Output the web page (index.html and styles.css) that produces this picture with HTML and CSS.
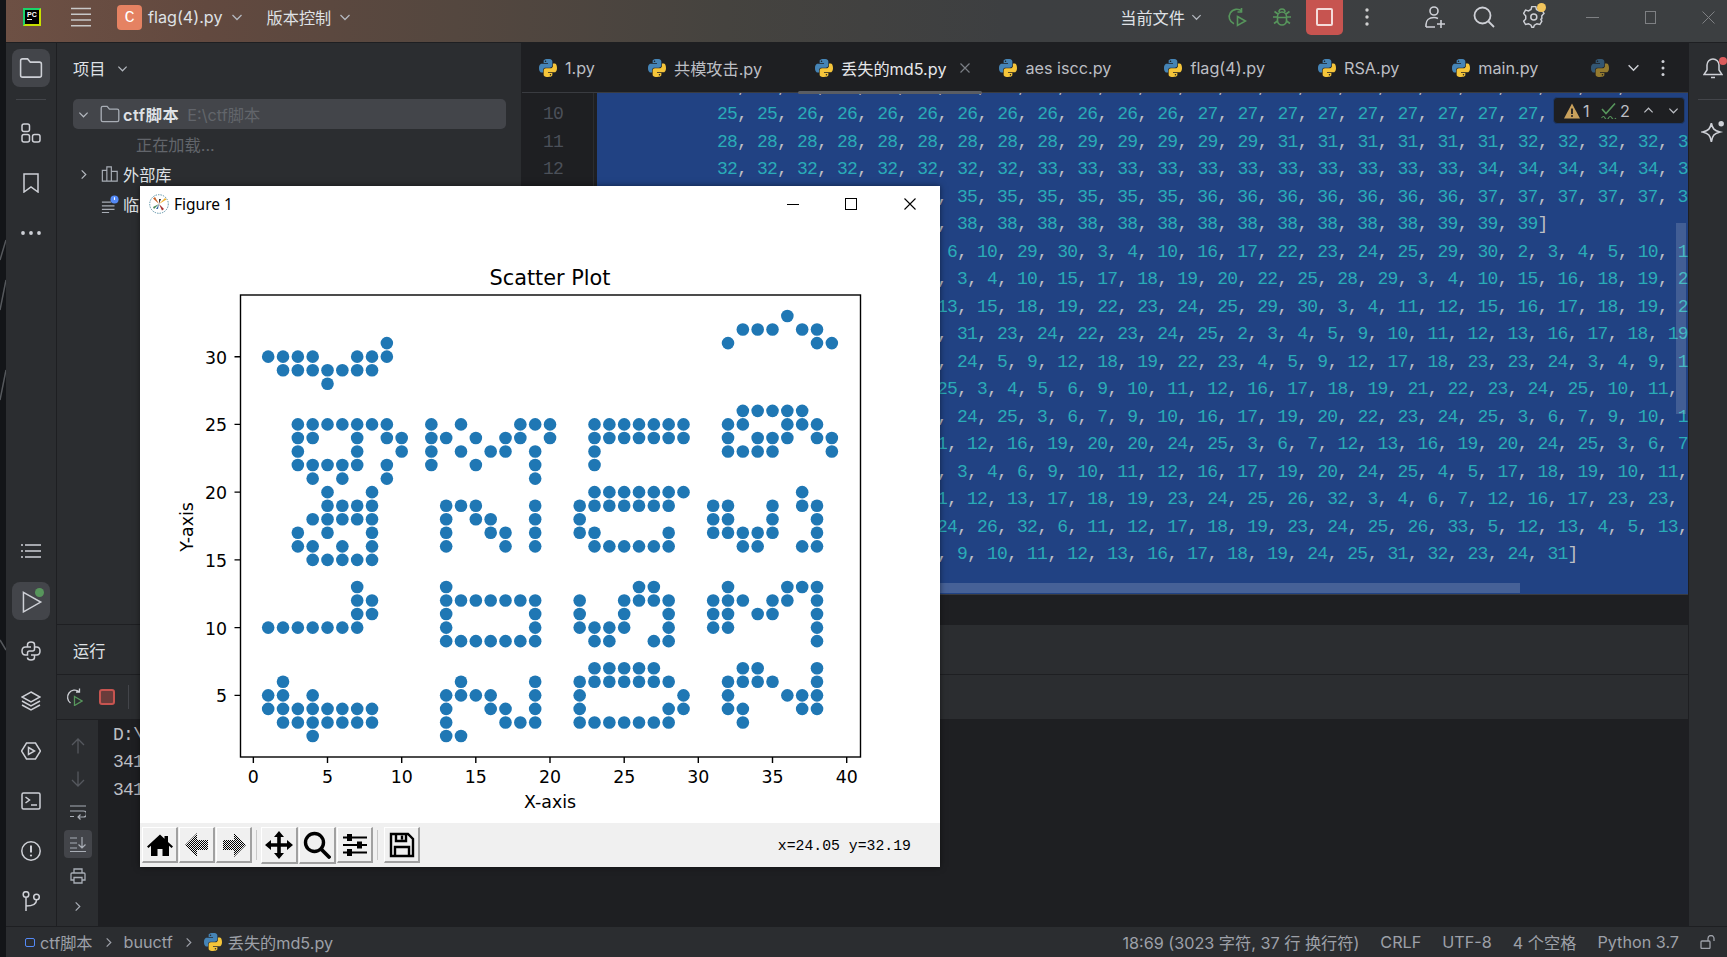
FILE: index.html
```html
<!DOCTYPE html>
<html lang="zh">
<head>
<meta charset="utf-8">
<title>PyCharm</title>
<link rel="stylesheet" href="styles.css">
</head>
<body>
<svg class="defs" width="0" height="0" aria-hidden="true">
  <defs>
    <symbol id="py" viewBox="0 0 24 24">
      <path fill="#4584b6" d="M11.914 0C5.82 0 6.2 2.656 6.2 2.656l.007 2.752h5.814v.826H3.9S0 5.789 0 11.969c0 6.18 3.403 5.96 3.403 5.96h2.03v-2.867s-.109-3.42 3.35-3.42h5.766s3.24.052 3.24-3.148V3.202S18.28 0 11.913 0zM8.708 1.85c.578 0 1.046.47 1.046 1.052 0 .581-.468 1.051-1.046 1.051-.579 0-1.046-.47-1.046-1.051 0-.582.467-1.052 1.046-1.052z"/>
      <path fill="#f5c53a" d="M12.087 24c6.092 0 5.712-2.656 5.712-2.656l-.007-2.752h-5.814v-.826h8.123s3.9.445 3.9-5.735c0-6.18-3.404-5.96-3.404-5.96h-2.03v2.867s.109 3.42-3.35 3.42H9.45s-3.24-.052-3.24 3.148v5.292S5.72 24 12.087 24zm3.206-1.85c-.579 0-1.046-.47-1.046-1.052 0-.581.467-1.051 1.046-1.051.578 0 1.046.47 1.046 1.051 0 .582-.468 1.052-1.046 1.052z"/>
    </symbol>
    <symbol id="chev" viewBox="0 0 12 12"><path d="M1.5 4l4.5 4.5L10.5 4" fill="none" stroke="currentColor" stroke-width="1.3"/></symbol>
    <symbol id="chev-r" viewBox="0 0 12 12"><path d="M4 1.5L8.5 6 4 10.5" fill="none" stroke="currentColor" stroke-width="1.3"/></symbol>
    <symbol id="folder" viewBox="0 0 20 20"><path d="M2 4.5A1.5 1.5 0 0 1 3.500 3h3.900l2.100 2.500h7A1.500 1.500 0 0 1 18 7v8.500a1.500 1.500 0 0 1-1.500 1.500h-13A1.500 1.500 0 0 1 2 15.500z" fill="none" stroke="currentColor" stroke-width="1.2"/></symbol>
    <pattern id="dither" width="2" height="2" patternUnits="userSpaceOnUse"><rect width="1" height="1" fill="#000"/><rect x="1" y="1" width="1" height="1" fill="#000"/></pattern>
  </defs>
</svg>

<div class="shell">
  <div class="wallpaper">
    <svg class="wall-art" viewBox="0 0 6 957" preserveAspectRatio="none"><path d="M0 260L6 240M0 310L6 280M0 400L6 370M0 640L6 650" stroke="#55585c" stroke-width="1.500"/></svg>
  </div>
  <div class="ide">
    <header class="titlebar">
      <div class="pc-logo"><span class="pc-text">PC</span><span class="pc-bar"></span></div>
      <svg class="burger" viewBox="0 0 20 20"><path d="M0 1.500h20M0 7.300h20M0 13h20M0 18.700h20" stroke="#c8c8c8" stroke-width="1.600"/></svg>
      <div class="project-badge">C</div>
      <span class="t-label t-file">flag(4).py</span>
      <svg class="t-chev"><use href="#chev"/></svg>
      <span class="t-label t-vcs">版本控制</span>
      <svg class="t-chev"><use href="#chev"/></svg>
      <div class="t-right">
        <span class="t-label">当前文件</span>
        <svg class="t-chev t-chev-s"><use href="#chev"/></svg>
        <svg class="t-ico ml-25" viewBox="0 0 20 20" fill="none" stroke="#57965c" stroke-width="1.600"><path d="M15 4.500A7.500 7.500 0 1 0 7 16.800M14.500 1v4h-4"/><path d="M10.500 9.500l8 4.500-8 4.500z"/></svg>
        <svg class="t-ico ml-25" viewBox="0 0 20 20" fill="none" stroke="#57965c" stroke-width="1.600"><rect x="5.500" y="5" width="9" height="13" rx="4.500"/><path d="M7 5a3 3 0 0 1 6 0M5.500 10H1M19 10h-4.500M5.500 14L2 16.500M14.500 14l3.500 2.500M6 7L2.500 4.500M14 7l3.500-2.500M5.500 10.500h9"/></svg>
        <div class="stop-btn"><span class="stop-sq"></span></div>
        <svg class="t-dots" viewBox="0 0 4 20"><circle cx="2" cy="3" r="1.700" fill="#d0d0d0"/><circle cx="2" cy="10" r="1.700" fill="#d0d0d0"/><circle cx="2" cy="17" r="1.700" fill="#d0d0d0"/></svg>
        <svg class="t-ico t-user" viewBox="0 0 22 22" fill="none" stroke="#ced0d6" stroke-width="1.600"><circle cx="10" cy="5" r="4"/><path d="M2 21v-2.500C2 14.500 5 11.500 10 11.500c2 0 3 .5 4 1M2 21h9M17 14v8M13 18h8"/></svg>
        <svg class="t-ico t-search" viewBox="0 0 22 22" fill="none" stroke="#ced0d6" stroke-width="1.800"><circle cx="9.500" cy="9.500" r="8"/><path d="M15.500 15.500L21 21"/></svg>
        <div class="t-gear">
          <svg class="t-ico" viewBox="0 0 22 22" fill="none" stroke="#ced0d6" stroke-width="1.500"><path d="M9 1.500h4l.8 3 2.600 1.500 3-.8 2 3.400-2.200 2.400 0 3-1 .5 1 2-2 3.400-3-.8-2.600 1.500-.8 2H9l-.8-2-2.600-1.500-3 .8-2-3.400 2.200-2.200v-3L.6 8.600l2-3.400 3 .8L8.200 4.500z" transform="translate(0 -1) scale(.98)"/><circle cx="10.800" cy="11" r="3"/></svg>
          <span class="gear-dot"></span>
        </div>
        <svg class="w-ctl w-min" viewBox="0 0 13 13"><path d="M0 6.500h13" stroke="#7e8083"/></svg>
        <svg class="w-ctl w-max" viewBox="0 0 13 13"><rect x="1.500" y=".5" width="10" height="12" fill="none" stroke="#7e8083"/></svg>
        <svg class="w-ctl w-close" viewBox="0 0 13 13"><path d="M.5.500l12 12M12.500.500l-12 12" stroke="#7e8083"/></svg>
      </div>
    </header>

    <div class="workspace">
      <nav class="leftbar">
        <div class="lb-group">
          <div class="lb-btn active"><svg class="lb-ico lb-ico-folder"><use href="#folder"/></svg></div>
          <div class="lb-sep"></div>
          <div class="lb-btn"><svg class="lb-ico" viewBox="0 0 20 20" fill="none" stroke="currentColor" stroke-width="1.500"><rect x="1" y="1" width="7.500" height="7.500" rx="2"/><rect x="1" y="11.500" width="7.500" height="7.500" rx="2"/><rect x="11.500" y="11.500" width="7.500" height="7.500" rx="2"/></svg></div>
          <div class="lb-btn"><svg class="lb-ico" viewBox="0 0 20 20" fill="none" stroke="currentColor" stroke-width="1.500"><path d="M3 1h14v18l-7-5-7 5z"/></svg></div>
          <div class="lb-btn"><svg class="lb-ico" viewBox="0 0 20 20" fill="currentColor"><circle cx="2" cy="10" r="1.900"/><circle cx="10" cy="10" r="1.900"/><circle cx="18" cy="10" r="1.900"/></svg></div>
        </div>
        <div class="lb-group">
          <div class="lb-btn"><svg class="lb-ico" viewBox="0 0 20 20" fill="none" stroke="currentColor" stroke-width="1.500"><path d="M4 4h16M4 10h16M4 16h16M0 4h2M0 10h2M0 16h2"/></svg></div>
          <div class="lb-btn active lb-run"><svg class="lb-ico lb-ico-run" viewBox="0 0 20 20" fill="none" stroke="currentColor" stroke-width="1.300"><path d="M3 2l15 8.500L3 19z"/></svg><span class="run-dot"></span></div>
          <div class="lb-btn"><svg class="lb-ico" viewBox="0 0 20 20" fill="none" stroke="currentColor" stroke-width="1.500"><path d="M6.500 6V3.500C6.500 1.800 8 1 10 1s3.500.8 3.500 2.500V8c0 1.200-1 2-2 2h-3c-1.200 0-2 1-2 2v2h-2C2 14 1 12.500 1 10s1-4 3.500-4H10"/><path d="M13.500 14v2.500c0 1.700-1.500 2.500-3.500 2.500s-3.500-.8-3.500-2.500M13.500 6h2c2.500 0 3.500 1.500 3.500 4s-1 4-3.500 4H10"/></svg></div>
          <div class="lb-btn"><svg class="lb-ico" viewBox="0 0 20 20" fill="none" stroke="currentColor" stroke-width="1.500"><path d="M10 1l9 5-9 5-9-5z"/><path d="M1 10l9 5 9-5M1 14l9 5 9-5"/></svg></div>
          <div class="lb-btn"><svg class="lb-ico" viewBox="0 0 20 20" fill="none" stroke="currentColor" stroke-width="1.500"><path d="M5.500 2h9L19.500 10l-5 8h-9L.5 10z"/><path d="M7.500 6.500l6 3.500-6 3.500z"/></svg></div>
          <div class="lb-btn"><svg class="lb-ico" viewBox="0 0 20 20" fill="none" stroke="currentColor" stroke-width="1.500"><rect x="1" y="2" width="18" height="16" rx="1.500"/><path d="M4.500 6l4 3-4 3M10 14h6"/></svg></div>
          <div class="lb-btn"><svg class="lb-ico" viewBox="0 0 20 20" fill="none" stroke="currentColor" stroke-width="1.500"><circle cx="10" cy="10" r="9.200"/><path d="M10 4.500v7" stroke-width="2"/><circle cx="10" cy="14.500" r="1.100" fill="currentColor" stroke="none"/></svg></div>
          <div class="lb-btn"><svg class="lb-ico" viewBox="0 0 20 20" fill="none" stroke="currentColor" stroke-width="1.500"><circle cx="5" cy="3.500" r="2.800"/><circle cx="15.500" cy="6" r="2.800"/><path d="M5 6.500V20M5 15c6 0 10.500-1 10.500-6"/></svg></div>
        </div>
      </nav>

      <div class="center">
        <div class="upper">
          <aside class="project">
            <div class="proj-head"><span>项目</span><svg class="chev-s"><use href="#chev"/></svg></div>
            <div class="tree-row selected">
              <svg class="tree-chev"><use href="#chev"/></svg>
              <svg class="tree-ico tree-folder"><use href="#folder"/></svg>
              <span class="tree-name">ctf脚本</span><span class="tree-path">E:\ctf脚本</span>
            </div>
            <div class="tree-row loading">正在加载...</div>
            <div class="tree-row">
              <svg class="tree-chev"><use href="#chev-r"/></svg>
              <svg class="tree-ico" viewBox="0 0 20 20" fill="none" stroke="currentColor" stroke-width="1.300"><path d="M1.500 6h5v12h-5zM6.500 2h5v16h-5zM11.500 7h6.500v11h-6.500z"/></svg>
              <span>外部库</span>
            </div>
            <div class="tree-row tree-temp">
              <span class="tree-chev-gap"></span>
              <svg class="tree-ico" viewBox="0 0 20 20"><path d="M1 8h10M1 12h14M1 16h14M1 19.500h8" stroke="currentColor" stroke-width="1.300"/><circle cx="15" cy="5" r="4.500" fill="#548af7"/><path d="M15 2.500V5.500" stroke="#fff" stroke-width="1.200"/></svg>
              <span>临时文件和控制台</span>
            </div>
          </aside>

          <main class="editor">
            <div class="tabs">
              <div class="tab"><svg class="py-ico"><use href="#py"/></svg><span>1.py</span></div>
              <div class="tab"><svg class="py-ico"><use href="#py"/></svg><span>共模攻击.py</span></div>
              <div class="tab tab-active"><svg class="py-ico"><use href="#py"/></svg><span>丢失的md5.py</span>
                <svg class="tab-x" viewBox="0 0 10 10"><path d="M.5.500l9 9M9.500.500l-9 9" stroke="#7a7e85" stroke-width="1.200"/></svg></div>
              <div class="tab"><svg class="py-ico"><use href="#py"/></svg><span>aes iscc.py</span></div>
              <div class="tab"><svg class="py-ico"><use href="#py"/></svg><span>flag(4).py</span></div>
              <div class="tab"><svg class="py-ico"><use href="#py"/></svg><span>RSA.py</span></div>
              <div class="tab"><svg class="py-ico"><use href="#py"/></svg><span>main.py</span></div>
              <div class="tab tab-dim"><svg class="py-ico"><use href="#py"/></svg></div>
              <div class="tab-tools">
                <svg class="chev-m"><use href="#chev"/></svg>
                <svg class="dots-v" viewBox="0 0 4 18"><circle cx="2" cy="2.500" r="1.500" fill="#ced0d6"/><circle cx="2" cy="9" r="1.500" fill="#ced0d6"/><circle cx="2" cy="15.500" r="1.500" fill="#ced0d6"/></svg>
              </div>
            </div>
            <div class="code-wrap">
              <div class="gutter">
                <div class="ln">10</div>
                <div class="ln">11</div>
                <div class="ln">12</div>
              </div>
              <div class="code">
                <pre class="code-line code-first">  ,   ,   ,   ,   ,   ,   ,   ,   ,   ,   ,   ,   ,   ,   ,   ,   ,   ,   ,   ,   ,   ,   ,</pre>
                <pre class="code-line">25, 25, 26, 26, 26, 26, 26, 26, 26, 26, 26, 26, 27, 27, 27, 27, 27, 27, 27, 27, 27,</pre>
                <pre class="code-line">28, 28, 28, 28, 28, 28, 28, 28, 28, 29, 29, 29, 29, 29, 31, 31, 31, 31, 31, 31, 32, 32, 32, 32, 3</pre>
                <pre class="code-line">32, 32, 32, 32, 32, 32, 32, 32, 33, 33, 33, 33, 33, 33, 33, 33, 33, 33, 33, 34, 34, 34, 34, 34, 3</pre>
                <pre class="code-line">                      , 35, 35, 35, 35, 35, 35, 36, 36, 36, 36, 36, 36, 36, 37, 37, 37, 37, 37, 3</pre>
                <pre class="code-line">                      , 38, 38, 38, 38, 38, 38, 38, 38, 38, 38, 38, 38, 39, 39, 39]</pre>
                <pre class="code-line">                       6, 10, 29, 30, 3, 4, 10, 16, 17, 22, 23, 24, 25, 29, 30, 2, 3, 4, 5, 10, 1</pre>
                <pre class="code-line">                      , 3, 4, 10, 15, 17, 18, 19, 20, 22, 25, 28, 29, 3, 4, 10, 15, 16, 18, 19, 2</pre>
                <pre class="code-line">                      13, 15, 18, 19, 22, 23, 24, 25, 29, 30, 3, 4, 11, 12, 15, 16, 17, 18, 19, 2</pre>
                <pre class="code-line">                      , 31, 23, 24, 22, 23, 24, 25, 2, 3, 4, 5, 9, 10, 11, 12, 13, 16, 17, 18, 19</pre>
                <pre class="code-line">                      , 24, 5, 9, 12, 18, 19, 22, 23, 4, 5, 9, 12, 17, 18, 23, 23, 24, 3, 4, 9, 1</pre>
                <pre class="code-line">                      25, 3, 4, 5, 6, 9, 10, 11, 12, 16, 17, 18, 19, 21, 22, 23, 24, 25, 10, 11,</pre>
                <pre class="code-line">                      , 24, 25, 3, 6, 7, 9, 10, 16, 17, 19, 20, 22, 23, 24, 25, 3, 6, 7, 9, 10, 1</pre>
                <pre class="code-line">                     11, 12, 16, 19, 20, 20, 24, 25, 3, 6, 7, 12, 13, 16, 19, 20, 24, 25, 3, 6, 7</pre>
                <pre class="code-line">                      , 3, 4, 6, 9, 10, 11, 12, 16, 17, 19, 20, 24, 25, 4, 5, 17, 18, 19, 10, 11,</pre>
                <pre class="code-line">                     11, 12, 13, 17, 18, 19, 23, 24, 25, 26, 32, 3, 4, 6, 7, 12, 16, 17, 23, 23,</pre>
                <pre class="code-line">                      24, 26, 32, 6, 11, 12, 17, 18, 19, 23, 24, 25, 26, 33, 5, 12, 13, 4, 5, 13,</pre>
                <pre class="code-line">                      , 9, 10, 11, 12, 13, 16, 17, 18, 19, 24, 25, 31, 32, 23, 24, 31]</pre>
                <div class="inspect">
                  <svg class="ins-warn" viewBox="0 0 16 16"><path d="M8 .5L16 15.500H0z" fill="#c9a15c"/><path d="M8 5.500v5.500" stroke="#1e1f22" stroke-width="1.800"/><circle cx="8" cy="13" r="1" fill="#1e1f22"/></svg>
                  <span class="ins-n">1</span>
                  <svg class="ins-ok" viewBox="0 0 16 16" fill="none" stroke="#57965c" stroke-width="1.600"><path d="M1 6l4 4.500L14 .5"/><path d="M.5 15c1.500-2 2.500-2 3.500 0s2.500 2 3.500 0 2.500-2 3.500 0 2.500 2 4 0" stroke-width="1.100"/></svg>
                  <span class="ins-n">2</span>
                  <svg class="ins-chev ins-up"><use href="#chev"/></svg>
                  <svg class="ins-chev"><use href="#chev"/></svg>
                </div>
                <div class="vscroll"></div>
                <div class="hscroll"></div>
              </div>
            </div>
            <div class="editor-foot"></div>
          </main>
        </div>

        <section class="runpanel">
          <div class="run-head"><span>运行</span></div>
          <div class="run-tools">
            <svg class="rt-ico" viewBox="0 0 18 18" fill="none" stroke="#ced0d6" stroke-width="1.300"><path d="M14 3.500A7 7 0 1 0 5.500 15M14.500.500v3.500H11"/><path d="M9.500 8.500l7.500 4.500-7.500 4.500z" stroke="#57965c"/></svg>
            <div class="rt-stop"></div>
            <div class="rt-sep"></div>
          </div>
          <div class="run-body">
            <div class="run-side">
              <svg class="rs-ico rs-dim" viewBox="0 0 16 16" fill="none" stroke="currentColor" stroke-width="1.300"><path d="M8 15.500V1M2 7l6-6 6 6"/></svg>
              <svg class="rs-ico rs-dim" viewBox="0 0 16 16" fill="none" stroke="currentColor" stroke-width="1.300"><path d="M8 .5V15M2 9l6 6 6-6"/></svg>
              <svg class="rs-ico" viewBox="0 0 16 16" fill="none" stroke="currentColor" stroke-width="1.200"><path d="M0 2h16M0 7h13.500a2.500 2.500 0 0 1 0 6H8M10.500 10.500L8 13l2.500 2.500M0 12.500h4"/></svg>
              <div class="rs-active"><svg class="rs-ico" viewBox="0 0 16 16" fill="none" stroke="currentColor" stroke-width="1.200"><path d="M0 2h7M0 7h7M0 12h7M0 15.500h16M12 1v11M8.500 8.500L12 12l3.500-3.500"/></svg></div>
              <svg class="rs-ico" viewBox="0 0 16 16" fill="none" stroke="currentColor" stroke-width="1.300"><path d="M4 5V1h8v4M4 12H1V6a1 1 0 0 1 1-1h12a1 1 0 0 1 1 1v6h-3M4 9.500h8V15H4z"/></svg>
              <svg class="rs-chev"><use href="#chev-r"/></svg>
            </div>
            <div class="console">
              <div class="con-line">D:\python\python.exe E:\ctf脚本\buuctf\丢失的md5.py</div>
              <div class="con-line">341</div>
              <div class="con-line">341</div>
            </div>
          </div>
        </section>
      </div>

      <aside class="rightbar">
        <div class="rb-bell">
          <svg class="rb-ico" viewBox="0 0 20 22" fill="none" stroke="currentColor" stroke-width="1.500"><path d="M10 2a6 6 0 0 0-6 6v5l-3 4.500h18L16 13V8a6 6 0 0 0-6-6zM8 20.500h4"/></svg>
          <span class="bell-dot"></span>
        </div>
        <div class="rb-sep"></div>
        <svg class="rb-ico rb-star" viewBox="0 0 22 22" fill="none" stroke="currentColor" stroke-width="1.500"><path d="M9.500 3c1 5 2.500 6.500 8 8-5.500 1.500-7 3-8 9-1-6-2.500-7.500-8-9 5.500-1.500 7-3 8-8z"/><circle cx="18.500" cy="3.500" r="2.500" fill="currentColor" stroke="none"/></svg>
      </aside>
    </div>

    <footer class="statusbar">
      <span class="crumb-dot"></span><span>ctf脚本</span>
      <svg class="crumb-chev"><use href="#chev-r"/></svg>
      <span>buuctf</span>
      <svg class="crumb-chev"><use href="#chev-r"/></svg>
      <svg class="crumb-py"><use href="#py"/></svg><span class="crumb-file">丢失的md5.py</span>
      <div class="st-right">
        <span>18:69 (3023 字符, 37 行 换行符)</span>
        <span>CRLF</span>
        <span>UTF-8</span>
        <span>4 个空格</span>
        <span>Python 3.7</span>
        <svg class="st-lock" viewBox="0 0 16 14" fill="none" stroke="#9da0a8" stroke-width="1.300"><rect x="1" y="6" width="9" height="7.500" rx="1"/><path d="M8 6V3.500a3 3 0 0 1 6 0V6"/></svg>
      </div>
    </footer>
  </div>

  <div class="figure">
    <div class="fig-title">
      <svg class="fig-logo" viewBox="0 0 20 20">
        <circle cx="10" cy="10" r="9.300" fill="#fff" stroke="#3a7a94" stroke-width=".8" stroke-dasharray="1.500 1"/>
        <path d="M10 10L4 4.500l2-1.500z" fill="#c8642c"/><path d="M10 10l6-6 1.500 1.500z" fill="#f0b030"/><path d="M10 10l-6 3 1 2z" fill="#4a8a5a"/><path d="M10 10l5 5-2 1.500z" fill="#a83030"/><path d="M10 10V5h2z" fill="#333"/><path d="M10 10l-3 5h2z" fill="#3a6ea5"/>
      </svg>
      <span class="fig-name">Figure 1</span>
      <div class="fig-ctls">
        <div class="fig-ctl"><svg viewBox="0 0 12 12"><path d="M0 6.500h12" stroke="#000"/></svg></div>
        <div class="fig-ctl"><svg viewBox="0 0 12 12"><rect x=".5" y=".5" width="11" height="11" fill="none" stroke="#000"/></svg></div>
        <div class="fig-ctl"><svg viewBox="0 0 12 12"><path d="M.5.500l11 11M11.500.500l-11 11" stroke="#000" stroke-width="1.100"/></svg></div>
      </div>
    </div>
    <svg class="plot" id="plot" viewBox="0 0 800 600" xmlns="http://www.w3.org/2000/svg">
      <rect class="spine" x="100.500" y="72" width="620" height="462"/>
      <path class="tick" d="M113.350 534v6M187.500 534v6M261.700 534v6M335.800 534v6M410 534v6M484.200 534v6M558.300 534v6M632.500 534v6M706.700 534v6M100.500 472.400h-6M100.500 404.600h-6M100.500 336.900h-6M100.500 269.100h-6M100.500 201.400h-6M100.500 133.700h-6"/>
      <g class="tlx">
        <text x="113.350" y="560">0</text><text x="187.500" y="560">5</text><text x="261.700" y="560">10</text><text x="335.800" y="560">15</text><text x="410" y="560">20</text><text x="484.200" y="560">25</text><text x="558.300" y="560">30</text><text x="632.500" y="560">35</text><text x="706.700" y="560">40</text>
      </g>
      <g class="tly">
        <text x="87" y="479.400">5</text><text x="87" y="411.600">10</text><text x="87" y="343.900">15</text><text x="87" y="276.100">20</text><text x="87" y="208.400">25</text><text x="87" y="140.700">30</text>
      </g>
      <text class="p-title" x="410" y="62">Scatter Plot</text>
      <text class="p-label" x="410" y="585">X-axis</text>
      <text class="p-label" transform="translate(53 304) rotate(-90)">Y-axis</text>
    </svg>
    <div class="tk-bar">
      <div class="tk-btn"><svg viewBox="0 0 26 24"><path d="M13 1.500L0 13.500l1.500 1.500L4 12.800V23h6.500v-7h5v7H22V12.800l2.500 2.200L26 13.500l-5-4.600V3h-3.500v2.700z"/></svg></div>
      <div class="tk-btn"><svg viewBox="0 0 26 24"><path d="M13 0L1 12l12 12v-7h11V7H13z" fill="url(#dither)"/></svg></div>
      <div class="tk-btn"><svg viewBox="0 0 26 24"><path d="M13 0l12 12-12 12v-7H2V7h11z" fill="url(#dither)"/></svg></div>
      <div class="tk-sep"></div>
      <div class="tk-btn tk-big"><svg viewBox="0 0 28 28"><path d="M14 0l5 6h-3.200v6.200H22V9l6 5-6 5v-3.200h-6.200V22H19l-5 6-5-6h3.200v-6.200H6V19l-6-5 6-5v3.200h6.200V6H9z"/></svg></div>
      <div class="tk-btn tk-big"><svg viewBox="0 0 28 28"><circle cx="11.500" cy="11.500" r="9" fill="none" stroke="#000" stroke-width="3.400"/><path d="M18 18l8 8" stroke="#000" stroke-width="3.800" stroke-linecap="round"/></svg></div>
      <div class="tk-btn"><svg viewBox="0 0 26 24"><path d="M1 4.500h24M1 12h24M1 19.500h24" stroke="#000" stroke-width="1.800"/><rect x="5" y="1" width="5" height="7"/><rect x="15" y="8.500" width="5" height="7"/><rect x="5" y="16" width="5" height="7"/></svg></div>
      <div class="tk-sep tk-sep-wide"></div>
      <div class="tk-btn tk-save"><svg viewBox="0 0 26 26" fill="none" stroke="#000" stroke-width="2.400"><path d="M2 2h17l5 5v17H2z"/><path d="M7 2v7h10V2M13 3.500v4M6 24v-9h14v9" /></svg></div>
      <div class="tk-status">x=24.05 y=32.19</div>
    </div>
  </div>
</div>
<script src="app.js"></script>
</body>
</html>
```

FILE: styles.css
```css
* { box-sizing: border-box; }
html, body { margin: 0; padding: 0; height: 100%; overflow: hidden; background: #101214; }
body { font-family: "Inter", "Noto Sans CJK SC", sans-serif; font-size: 16.200px; color: #dfe1e5; }
.defs { position: absolute; }

.shell { display: flex; width: 1727px; height: 957px; position: relative; }
.wallpaper { width: 6px; flex: none; background: #131518; }
.wall-art { width: 6px; height: 957px; display: block; }
.ide { flex: 1; min-width: 0; display: flex; flex-direction: column; background: #2b2d30; }

/* title bar */
.titlebar {
  height: 43px; flex: none; display: flex; align-items: center; padding: 0 0 8px 17px;
  border-bottom: 1px solid #1e1f22;
  background: linear-gradient(90deg, #6d5044 0, #62493f 200px, #54473f 450px, #45433f 720px, #3d3f41 1000px, #3c3f41 100%);
  color: #dfe1e5;
}
.pc-logo {
  width: 18px; height: 18px; flex: none; background: #000; border: 2px solid #c8e000;
  border-top-color: #19d46a; border-left-color: #19d46a;
  display: flex; flex-direction: column; padding: 1px 0 0 2px; gap: 1px;
}
.pc-text { font: 700 7px/7px "Liberation Sans", sans-serif; color: #fff; }
.pc-bar { width: 5px; height: 1px; background: #fff; }
.burger { width: 20px; height: 20px; margin-left: 30px; flex: none; }
.project-badge {
  width: 25px; height: 25px; margin-left: 26px; border-radius: 4px; background: #e58262; color: #fff;
  display: flex; align-items: center; justify-content: center; font-size: 17px; font-family: "Liberation Mono", monospace;
  flex: none;
}
.t-label { font-size: 16.200px; white-space: nowrap; color: #dfe1e5; }
.t-file { margin-left: 6px; }
.t-vcs { margin-left: 24px; }
.t-chev { width: 12px; height: 12px; margin-left: 8px; color: #b4b8bf; flex: none; }
.t-chev-s { margin-left: 6px; width: 11px; }
.t-right { margin-left: auto; display: flex; align-items: center; padding-right: 12px; }
.t-ico { width: 20px; height: 20px; flex: none; display: block; }
.ml-25 { margin-left: 25px; }
.stop-btn {
  width: 37px; height: 35px; margin-left: 14px; background: #c75450; border-radius: 0 0 5px 5px;
  display: flex; align-items: center; justify-content: center;
}
.stop-sq { width: 17px; height: 18px; border: 2px solid #f4dcdb; border-radius: 2px; }
.t-dots { width: 4px; height: 20px; margin-left: 22px; flex: none; }
.t-user { width: 22px; height: 22px; margin-left: 55px; }
.t-search { width: 22px; height: 22px; margin-left: 27px; }
.t-gear { position: relative; margin-left: 28px; width: 22px; height: 22px; }
.t-gear .t-ico { width: 22px; height: 22px; }
.gear-dot { position: absolute; right: -1px; top: -3px; width: 9px; height: 9px; background: #f2c55c; border-radius: 50%; }
.w-ctl { width: 13px; height: 13px; flex: none; }
.w-min { margin-left: 41px; }
.w-max { margin-left: 45px; }
.w-close { margin-left: 45px; }

/* workspace */
.workspace { flex: 1; min-height: 0; display: flex; }
.leftbar {
  width: 51px; flex: none; display: flex; flex-direction: column; justify-content: space-between; align-items: center;
  padding: 6px 0 6px; border-right: 1px solid #1e1f22; background: #2b2d30;
}
.lb-group { display: flex; flex-direction: column; align-items: center; gap: 12px; }
.lb-btn { width: 38px; height: 38px; border-radius: 8px; display: flex; align-items: center; justify-content: center; color: #ced0d6; position: relative; }
.lb-btn.active { background: #43454a; }
.lb-ico { width: 20px; height: 20px; display: block; }
.lb-ico-folder { width: 26px; height: 26px; }
.lb-ico-run { width: 23px; height: 23px; }
.lb-sep { width: 30px; height: 1px; background: #43454a; margin-bottom: 2px; }
.run-dot { position: absolute; right: 6px; top: 6px; width: 9px; height: 9px; background: #57965c; border-radius: 50%; }

.center { flex: 1; min-width: 0; display: flex; flex-direction: column; }
.upper { height: 581px; flex: none; display: flex; }

/* project */
.project { width: 465px; flex: none; background: #2b2d30; border-right: 1px solid #1e1f22; padding: 0 15px 0 16px; overflow: hidden; }
.proj-head { height: 50px; margin-bottom: 6px; display: flex; align-items: center; gap: 12px; color: #dfe1e5; }
.chev-s { width: 11px; height: 11px; color: #b4b8bf; }
.tree-row { height: 30px; display: flex; align-items: center; color: #dfe1e5; white-space: nowrap; padding-left: 5px; }
.tree-row.selected { background: #43454a; border-radius: 5px; }
.tree-chev { width: 11px; height: 11px; color: #b4b8bf; flex: none; }
.tree-chev-gap { width: 11px; height: 11px; flex: none; }
.tree-ico { width: 18px; height: 18px; margin: 0 4px 0 12px; color: #a8adb5; flex: none; }
.tree-folder { width: 22px; height: 22px; margin: 0 2px 0 10px; }
.tree-name { font-weight: 600; letter-spacing: .6px; color: #dfe1e5; }
.tree-path { margin-left: 8px; color: #62656b; }
.tree-row.loading { padding-left: 63px; color: #62656b; }

/* editor */
.editor { flex: 1; min-width: 0; display: flex; flex-direction: column; background: #1e1f22; }
.tabs { height: 50px; flex: none; display: flex; align-items: center; background: #1e1f22; border-bottom: 1px solid #393b40; position: relative; z-index: 1; }
.tab { height: 100%; display: flex; align-items: center; padding: 0 36px 0 17px; white-space: nowrap; color: #bcbec4; position: relative; }
.tab-active { padding-right: 12px; color: #e6e7ea; }
.tab-active::after { content: ""; position: absolute; left: 0; right: 0; bottom: -2px; height: 3px; background: #5a5d63; border-radius: 2px; }
.tab-dim { padding: 0 0 0 17px; opacity: .55; }
.tab-dim .py-ico { margin-right: 0; }
.py-ico { width: 18px; height: 18px; margin-right: 8px; flex: none; }
.tab-x { width: 10px; height: 10px; margin-left: 14px; }
.tab-tools { display: flex; align-items: center; gap: 21px; margin-left: 18px; color: #ced0d6; }
.chev-m { width: 13px; height: 13px; }
.dots-v { width: 4px; height: 18px; }
.code-wrap { height: 501px; flex: none; display: flex; }
.gutter { width: 75px; flex: none; background: #1e1f22; padding-top: 8px; position: relative; }
.gutter::after { content: ""; position: absolute; right: 3px; top: 0; bottom: 0; width: 1px; background: #2b2d30; }
.ln { height: 27.500px; padding-left: 21px; font: 18px/27.500px "Liberation Mono", monospace; letter-spacing: -.8px; color: #4b5059; }
.code { flex: 1; min-width: 0; position: relative; overflow: hidden; background: #214283; padding-left: 120px; }
.code-line { margin: 0; height: 27.500px; font: 18px/27.500px "Liberation Mono", monospace; letter-spacing: -.8px; color: #bcbec4; white-space: pre; }
.code-first { margin-top: -19.500px; }
.num { color: #2aacb8; }
.inspect {
  position: absolute; right: 3px; top: 4px; width: 132px; height: 27px; background: #1e1f22; border-radius: 4px;
  display: flex; align-items: center; padding-left: 10px; color: #bcbec4; border: 1px solid #1d3a6e;
}
.ins-warn { width: 16px; height: 16px; }
.ins-n { margin-left: 3px; width: 9px; }
.ins-ok { width: 16px; height: 16px; margin-left: 9px; }
.ins-chev { width: 11px; height: 11px; margin-left: 14px; color: #bcbec4; }
.ins-up { transform: rotate(180deg); margin-left: 14px; }
.vscroll { position: absolute; right: 2px; top: 130px; width: 10px; height: 191px; background: rgba(255,255,255,.15); }
.hscroll { position: absolute; left: 0; width: 923px; top: 490px; height: 10px; background: rgba(255,255,255,.17); }
.editor-foot { flex: 1; background: #1e1f22; border-top: 1px solid #393b40; }

/* run */
.runpanel { flex: 1; min-height: 0; display: flex; flex-direction: column; background: #2b2d30; }
.run-head { height: 51px; flex: none; display: flex; align-items: center; padding-left: 16px; border-top: 1px solid #1e1f22; border-bottom: 1px solid #1e1f22; }
.run-tools { height: 45px; flex: none; display: flex; align-items: center; padding-left: 8px; border-bottom: 1px solid #1e1f22; }
.rt-ico { width: 18px; height: 18px; }
.rt-stop { width: 16px; height: 16px; margin-left: 16px; background: #6a3c3b; border: 2px solid #c75450; border-radius: 3px; }
.rt-sep { width: 1px; height: 24px; margin-left: 13px; background: #43454a; }
.run-body { flex: 1; min-height: 0; display: flex; }
.run-side { width: 41px; flex: none; display: flex; flex-direction: column; align-items: center; padding-top: 18px; color: #a8adb5; background: #2b2d30; }
.rs-ico { width: 16px; height: 16px; flex: none; display: block; margin-bottom: 17px; }
.rs-dim { color: #55585e; }
.rs-active { width: 28px; height: 28px; background: #43454a; border-radius: 4px; display: flex; align-items: center; justify-content: center; margin: -7px 0 10px; }
.rs-active .rs-ico { margin: 0; }
.rs-chev { width: 11px; height: 11px; }
.console { flex: 1; background: #1e1f22; padding: 1.500px 0 0 15px; }
.con-line { height: 27.500px; font: 18px/27.500px "Liberation Mono", "Noto Sans CJK SC", monospace; letter-spacing: -.8px; color: #bcbec4; white-space: pre; }

/* right bar */
.rightbar { width: 39px; flex: none; display: flex; flex-direction: column; align-items: center; padding-top: 14px; border-left: 1px solid #1e1f22; background: #2b2d30; color: #ced0d6; }
.rb-bell { position: relative; width: 20px; height: 22px; margin-left: 10px; }
.rb-ico { width: 20px; height: 22px; display: block; }
.bell-dot { position: absolute; right: -4px; top: 0; width: 8px; height: 8px; border-radius: 50%; background: #db5c5c; }
.rb-sep { width: 30px; height: 1px; background: #43454a; margin: 20px 0 20px 10px; }
.rightbar .rb-star { width: 24px; height: 24px; margin-left: 10px; flex: none; }

/* status */
.statusbar { height: 31px; flex: none; display: flex; align-items: center; padding-left: 19px; border-top: 1px solid #1e1f22; background: #2b2d30; color: #9da0a8; white-space: nowrap; }
.crumb-dot { width: 10px; height: 9px; border: 1.500px solid #548af7; border-radius: 2px; margin-right: 5px; flex: none; }
.crumb-chev { width: 11px; height: 13px; margin: 0 10px; flex: none; color: #9da0a8; }
.crumb-py { width: 18px; height: 18px; margin-right: 6px; flex: none; }
.st-right { margin-left: auto; display: flex; align-items: center; gap: 21px; padding-right: 11px; }
.st-lock { width: 16px; height: 14px; }

/* matplotlib window */
.figure { position: absolute; left: 140px; top: 186px; width: 800px; height: 681px; background: #fff; display: flex; flex-direction: column; box-shadow: 0 0 6px rgba(0,0,0,.5); z-index: 5; }
.fig-title { height: 37px; flex: none; display: flex; align-items: center; padding: 0 0 2px 9px; background: #fff; }
.fig-logo { width: 20px; height: 20px; flex: none; }
.fig-name { margin-left: 5px; font: 15.500px "Noto Sans", sans-serif; color: #000; }
.fig-ctls { margin-left: auto; display: flex; padding-right: 1px; }
.fig-ctl { width: 58.500px; height: 35px; display: flex; align-items: center; justify-content: center; }
.fig-ctl svg { width: 12px; height: 12px; }
.plot { width: 800px; height: 600px; display: block; flex: none; }
.spine { fill: none; stroke: #000; stroke-width: 1.400; }
.tick { stroke: #000; stroke-width: 1.400; fill: none; }
.plot text { font-family: "DejaVu Sans", sans-serif; font-size: 17.360px; fill: #000; }
.tlx text { text-anchor: middle; }
.tly text { text-anchor: end; }
.plot .p-title { font-size: 20.830px; text-anchor: middle; }
.p-label { text-anchor: middle; }
.dot { fill: #1f77b4; }

.tk-bar { height: 44px; flex: none; display: flex; align-items: center; padding-left: 2px; background: #f0f0f0; gap: 1px; }
.tk-btn { width: 36px; height: 36px; flex: none; display: flex; align-items: center; justify-content: center; background: #f0f0f0; border: 1px solid #fff; border-right: 2px solid #a0a0a0; border-bottom: 2px solid #a0a0a0; }
.tk-btn svg { width: 26px; height: 24px; }
.tk-big { width: 37px; height: 37px; }
.tk-big svg { width: 28px; height: 28px; }
.tk-sep { width: 1px; height: 30px; background: #c8c8c8; margin: 0 3px; }
.tk-sep-wide { margin-right: 5px; }
.tk-save svg { width: 26px; height: 26px; }
.tk-status { margin: 1px 0 0 auto; padding-right: 29px; font: 14.800px "Liberation Mono", monospace; color: #000; white-space: nowrap; }
```

FILE: app.js
```js
// Scatter data: y value -> list of x values, as read from the plot.
var rows = {
  33: [36],
  32: [33, 34, 35, 37, 38],
  31: [9, 32, 38, 39],
  30: [1, 2, 3, 4, 7, 8, 9],
  29: [2, 3, 4, 5, 6, 7, 8],
  28: [5],
  26: [33, 34, 35, 36, 37],
  25: [3, 4, 5, 6, 7, 8, 9, 12, 14, 18, 19, 20, 23, 24, 25, 26, 27, 28, 29, 32, 33, 36, 37, 38],
  24: [3, 4, 7, 9, 10, 12, 13, 15, 17, 18, 20, 23, 24, 25, 26, 27, 28, 29, 32, 34, 35, 36, 38, 39],
  23: [3, 7, 10, 12, 14, 16, 17, 19, 23, 32, 33, 34, 35, 39],
  22: [3, 4, 5, 6, 7, 9, 12, 15, 19, 23],
  21: [4, 6, 9, 19],
  20: [5, 8, 23, 24, 25, 26, 27, 28, 29, 37],
  19: [5, 6, 7, 8, 13, 14, 15, 19, 22, 23, 24, 25, 26, 27, 28, 31, 32, 35, 37, 38],
  18: [4, 5, 6, 7, 8, 13, 15, 16, 19, 22, 31, 32, 35, 38],
  17: [3, 5, 8, 13, 16, 17, 19, 22, 23, 28, 31, 32, 33, 34, 35, 38],
  16: [3, 4, 6, 8, 13, 17, 19, 23, 24, 25, 26, 27, 28, 33, 34, 37, 38],
  15: [4, 5, 6, 7, 8],
  13: [7, 13, 26, 27, 32, 36, 37, 38],
  12: [7, 8, 13, 14, 15, 16, 17, 18, 19, 22, 25, 26, 27, 28, 31, 32, 33, 35, 36, 38],
  11: [7, 8, 13, 19, 22, 25, 28, 31, 32, 34, 35, 38],
  10: [1, 2, 3, 4, 5, 6, 7, 13, 19, 22, 23, 24, 25, 28, 31, 32, 38],
  9: [13, 14, 15, 16, 17, 18, 19, 23, 24, 27, 28, 38],
  7: [23, 24, 25, 26, 27, 33, 34, 38],
  6: [2, 14, 19, 22, 23, 24, 25, 26, 27, 28, 32, 33, 34, 35, 38],
  5: [1, 2, 4, 13, 14, 15, 16, 19, 22, 29, 32, 36, 37, 38],
  4: [1, 2, 3, 4, 5, 6, 7, 8, 13, 16, 17, 19, 22, 28, 29, 32, 33, 37, 38],
  3: [2, 3, 4, 5, 6, 7, 8, 13, 17, 18, 19, 22, 23, 24, 25, 26, 27, 28, 33],
  2: [4, 13, 14]
};

var NS = "http://www.w3.org/2000/svg";
var plot = document.getElementById("plot");
Object.keys(rows).forEach(function (y) {
  rows[y].forEach(function (x) {
    var c = document.createElementNS(NS, "circle");
    c.setAttribute("class", "dot");
    c.setAttribute("cx", (113.35 + 14.833 * x).toFixed(2));
    c.setAttribute("cy", (534 - (y - 0.45) * 13.548).toFixed(2));
    c.setAttribute("r", "6.3");
    plot.appendChild(c);
  });
});

// Syntax colouring: numbers in the editor.
document.querySelectorAll(".code-line").forEach(function (line) {
  line.innerHTML = line.textContent.replace(/\d+/g, '<span class="num">$&</span>');
});
```
